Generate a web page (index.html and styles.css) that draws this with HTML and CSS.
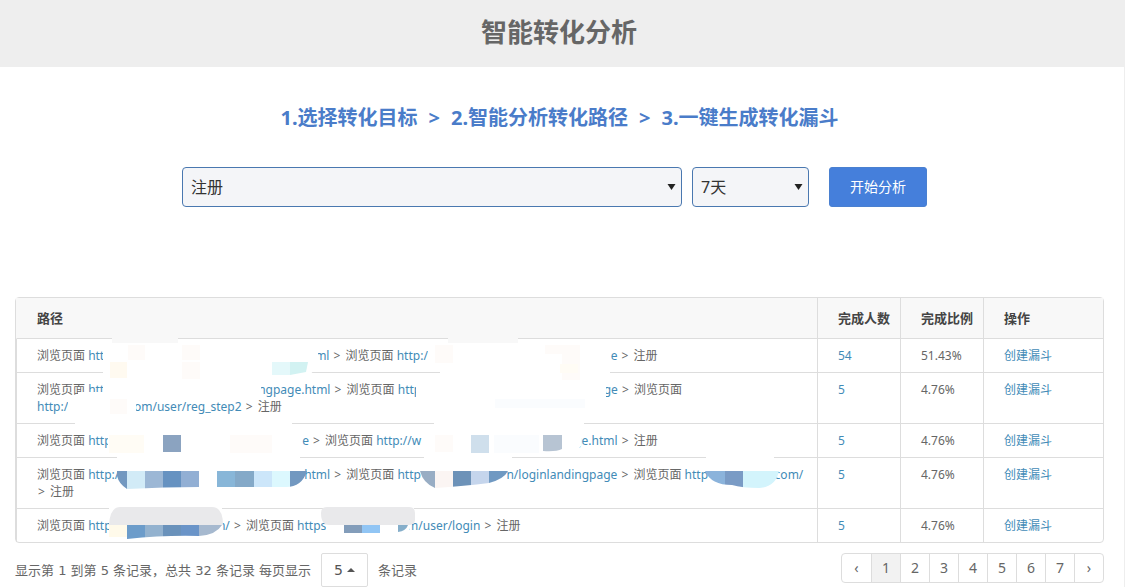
FILE: index.html
```html
<!DOCTYPE html>
<html lang="zh-CN">
<head>
<meta charset="utf-8">
<meta name="viewport" content="width=device-width, initial-scale=1">
<title>智能转化分析</title>
<link rel="stylesheet" href="styles.css">
</head>
<body>
<header class="page-header"><h1>智能转化分析</h1></header>
<main class="content">
  <h2 class="steps"><span>1.选择转化目标</span><span>&gt;</span><span>2.智能分析转化路径</span><span>&gt;</span><span>3.一键生成转化漏斗</span></h2>
  <form class="filters">
    <div class="select-box goal">
      <select aria-label="转化目标"><option>注册</option></select>
      <svg class="arrow" viewBox="0 0 8 6" aria-hidden="true"><path d="M0 0h8L4 6z"/></svg>
    </div>
    <div class="select-box days">
      <select aria-label="时间范围"><option>7天</option></select>
      <svg class="arrow" viewBox="0 0 8 6" aria-hidden="true"><path d="M0 0h8L4 6z"/></svg>
    </div>
    <button class="start" type="button">开始分析</button>
  </form>

  <div class="table-box">
    <table class="paths">
      <thead>
        <tr><th>路径</th><th class="num">完成人数</th><th class="num">完成比例</th><th class="act">操作</th></tr>
      </thead>
      <tbody>
        <tr>
          <td>浏览页面 <a href="#"><span class="lead r1a">htt</span>ml</a> <i>&gt;</i> 浏览页面 <a href="#"><span class="lead r1b">http:/</span>e</a> <i>&gt;</i> 注册</td>
          <td><a href="#">54</a></td><td>51.43%</td><td><a href="#">创建漏斗</a></td>
        </tr>
        <tr>
          <td>浏览页面 <a href="#"><span class="lead r2a">htt</span>ngpage.html</a> <i>&gt;</i> 浏览页面 <a href="#"><span class="lead r2b">http</span>ge</a> <i>&gt;</i> 浏览页面 <a href="#"><span class="lead r2c">http:/</span>om/user/reg_step2</a> <i>&gt;</i> 注册</td>
          <td><a href="#">5</a></td><td>4.76%</td><td><a href="#">创建漏斗</a></td>
        </tr>
        <tr>
          <td>浏览页面 <a href="#"><span class="lead r3a">http</span>e</a> <i>&gt;</i> 浏览页面 <a href="#"><span class="lead r3b">http://w</span>ge.html</a> <i>&gt;</i> 注册</td>
          <td><a href="#">5</a></td><td>4.76%</td><td><a href="#">创建漏斗</a></td>
        </tr>
        <tr>
          <td>浏览页面 <a href="#"><span class="lead r4a">http:/</span>html</a> <i>&gt;</i> 浏览页面 <a href="#"><span class="lead r4b">http</span>n/loginlandingpage</a> <i>&gt;</i> 浏览页面 <a href="#"><span class="lead r4c">http</span>com/</a> <i>&gt;</i> 注册</td>
          <td><a href="#">5</a></td><td>4.76%</td><td><a href="#">创建漏斗</a></td>
        </tr>
        <tr>
          <td>浏览页面 <a href="#"><span class="lead r5a">http</span>m/</a> <i>&gt;</i> 浏览页面 <a href="#"><span class="lead r5b">https</span>m/user/login</a> <i>&gt;</i> 注册</td>
          <td><a href="#">5</a></td><td>4.76%</td><td><a href="#">创建漏斗</a></td>
        </tr>
      </tbody>
    </table>
    <svg class="mosaic" width="803" height="246" viewBox="15 297 803 246" aria-hidden="true">
      <defs>
        <clipPath id="blob1"><path d="M117 471H199V487Q165 487 127 489Q119 484 117 476ZM217 471H307Q302 487 286 487H217Z"/></clipPath>
        <clipPath id="blob2"><path d="M420 471H508Q504 479 489 483Q465 486 435 488Q423 483 420 471Z"/></clipPath>
        <clipPath id="blob3"><path d="M705 471H779Q776 487 759 488Q742 488 732 485Q711 485 705 471Z"/></clipPath>
        <clipPath id="blob4"><path d="M109 525H222Q216 535 199 536Q165 535 127 539V525Z"/></clipPath>
      </defs>
      <g fill="#fff">
        <path d="M112 338H178V344H318V366L305 380H261V398H136V414H292V430H75V414H68V398H78V392H103V344H112Z"/>
        <path d="M108 430H300V458H303V471H117V452H108Z"/>
        <path d="M448 337H518V344H600V366H610V384H606V398H584V430H434V410H416V380H440V366H428V344H448Z"/>
        <path d="M424 432H581V446L576 452H512V471H424ZM706 456H774V471H706ZM109 507H222V532H109ZM326 508H414V520L408 532H326Z"/>
      </g>
      <path fill="#f8f8f8" d="M112 337h66v6h-66zM448 337h70v6h-70z"/>
      <path fill="#fefbf9" d="M128 345h17v15h-17zM182 345h18v15h-18zM182 362h18v17h-18zM435 345h18v18h-18zM545 345h35v9h-35zM110 399h17v15h-17zM230 435h42v18h-42zM435 435h18v17h-18zM562 345h18v35h-18z"/>
      <path fill="#fffaf0" d="M110 362h17v16h-17z"/><path fill="#fffcf5" d="M109 435h35v18h-35zM560 364h18v9h-18z"/>
      <path fill="#fafcfe" d="M495 399h90v9h-90zM494 435h45v18h-45z"/>
      <path fill="#e4f8fa" d="M272 362h18v13h-18z"/><path fill="#d2f2f2" d="M290 362h18l-2 10-16 3z"/>
      <path fill="#8ba3c0" d="M163 435h18v17h-18z"/><path fill="#cfdfec" d="M471 435h18v18h-18z"/><path fill="#b7c4d3" d="M543 435h19v14q-6 3-19 2z"/>
      <g clip-path="url(#blob1)">
        <path fill="#7298c0" d="M117 471h10v18h-10zM290 471h18v18h-18z"/><path fill="#d2ebf7" d="M127 471h18v18h-18z"/><path fill="#9cb7d5" d="M145 471h18v18h-18z"/><path fill="#6692c1" d="M163 471h18v18h-18z"/><path fill="#92afd4" d="M181 471h18v18h-18z"/><path fill="#88b6d8" d="M217 471h18v18h-18z"/><path fill="#84a9c8" d="M235 471h19v18h-19z"/><path fill="#cce6fa" d="M254 471h18v18h-18z"/><path fill="#dcf8fe" d="M272 471h18v18h-18z"/>
      </g>
      <g clip-path="url(#blob2)">
        <path fill="#98adc4" d="M420 471h15v18h-15z"/><path fill="#fbf5f3" d="M435 471h18v18h-18z"/><path fill="#6d92b8" d="M453 471h18v18h-18z"/><path fill="#c5d5ec" d="M471 471h18v18h-18z"/><path fill="#7099c2" d="M489 471h19v18h-19z"/>
      </g>
      <g clip-path="url(#blob3)">
        <path fill="#8bb3db" d="M705 471h20v18h-20z"/><path fill="#7a9bc5" d="M725 471h18v18h-18z"/><path fill="#d3f4fc" d="M743 471h36v18h-36z"/>
      </g>
      <path fill="#fffaea" d="M109 525h18v12h-18z"/>
      <g clip-path="url(#blob4)">
        <path fill="#6c9cca" d="M127 525h18v14h-18z"/><path fill="#93b2cf" d="M145 525h18v14h-18z"/><path fill="#6a92bb" d="M163 525h18v14h-18z"/><path fill="#6a94c8" d="M181 525h18v14h-18z"/><path fill="#a6b9cf" d="M199 525h23v14h-23z"/>
      </g>
      <path fill="#e9e9eb" d="M109 525Q110 507 120 507H212Q223 507 223 525ZM321 513Q321 507 327 507H409Q415 507 415 513V520Q415 525 408 525H329Q321 525 321 513Z"/>
      <path fill="#839dba" d="M344 525h18v8h-18z"/><path fill="#91c5f4" d="M362 525h18v8h-18z"/><path fill="#85aeca" d="M398 525h10q-2 6-10 7z"/>
    </svg>
  </div>

  <div class="table-footer">
    <div class="info">
      <span>显示第 1 到第 5 条记录，总共 32 条记录 每页显示</span>
      <button class="page-size" type="button" aria-label="每页 5 条">5<svg viewBox="0 0 8 4" aria-hidden="true"><path d="M0 4h8L4 0z"/></svg></button>
      <span>条记录</span>
    </div>
    <nav class="pager" aria-label="分页">
      <a href="#" aria-label="上一页">‹</a><a href="#" class="active" aria-current="page">1</a><a href="#">2</a><a href="#">3</a><a href="#">4</a><a href="#">5</a><a href="#">6</a><a href="#">7</a><a href="#" aria-label="下一页">›</a>
    </nav>
  </div>
</main>
</body>
</html>
```
FILE: styles.css
```css
* { box-sizing: border-box; }
body {
  margin: 0;
  background: #fff;
  color: #666;
  font: 13px/17px "Noto Sans", "Noto Sans CJK SC", sans-serif;
}
a { color: #428bb7; text-decoration: none; }
button, select { font-family: inherit; }

.page-header {
  display: flex;
  justify-content: center;
  padding: 13px 7px 16px 0;
  background: #eee;
}
h1 { margin: 0; font-size: 26px; line-height: 38px; color: #666; }

.content {
  padding: 37px 20px 0 15px;
  border-right: 1px solid #eee;
}
.steps {
  display: flex;
  justify-content: center;
  gap: 11px;
  margin: 0;
  font-size: 20px;
  line-height: 28px;
  color: #4a7cc9;
}

.filters {
  display: flex;
  justify-content: center;
  gap: 10px;
  margin: 35px 10px 90px 0;
}
.select-box { position: relative; height: 40px; }
.goal { flex: 0 1 500px; }
.days { flex: 0 0 117px; }
.select-box select {
  appearance: none;
  width: 100%;
  height: 100%;
  padding: 0 24px 0 8px;
  border: 1px solid #4a78b0;
  border-radius: 4px;
  background: #f4f5f8;
  color: #333;
  font-size: 16px;
}
.arrow {
  position: absolute;
  top: 17px;
  right: 6px;
  width: 9px;
  height: 6px;
  fill: #222;
  pointer-events: none;
}
.start {
  width: 98px;
  height: 40px;
  margin-left: 10px;
  padding: 0 0 2px;
  border: 1px solid #4a80d0;
  border-radius: 3px;
  background: #457fdb;
  color: #fff;
  font-size: 14px;
}

.table-box {
  position: relative;
  border: 1px solid #ddd;
  border-radius: 4px;
}
.paths {
  width: 100%;
  border-spacing: 0;
  table-layout: fixed;
}
.paths th, .paths td {
  padding: 8px 8px 8px 20px;
  border-bottom: 1px solid #ddd;
  border-left: 1px solid #ddd;
  text-align: left;
  vertical-align: top;
  white-space: nowrap;
}
.paths th {
  padding: 12px 8px 11px 20px;
  background: #f8f8f8;
  color: #444;
  font-size: 13px;
}
.paths td { font-size: 12px; }
.paths td:first-child { white-space: normal; }
.paths th:first-child { border-left-color: #f8f8f8; }
.paths tr:last-child td { border-bottom: 0; }
.paths thead tr th { border-bottom: 1px solid #ddd; }
.num { width: 83px; }
.act { width: 120px; }
.paths i { padding: 0 2px 0 1px; font-style: normal; }
.paths td a { white-space: nowrap; }

.lead { display: inline-block; }
.r1a { width: 227px; }
.r1b { width: 214px; }
.r2a { width: 170px; }
.r2b { width: 206px; }
.r2c { width: 97px; }
.r3a { width: 214px; }
.r3b { width: 198px; }
.r4a { width: 216px; }
.r4b { width: 109px; }
.r4c { width: 90px; }
.r5a { width: 126px; }
.r5b { width: 110px; }

.mosaic {
  position: absolute;
  top: -1px;
  left: -1px;
  pointer-events: none;
}

.table-footer {
  display: flex;
  justify-content: space-between;
  padding-top: 10px;
}
.info {
  display: flex;
  align-items: center;
  gap: 10px;
  font-family: "DejaVu Sans", "Noto Sans CJK SC", sans-serif;
}
.page-size {
  display: flex;
  align-items: center;
  gap: 4px;
  height: 34px;
  padding: 0 12px;
  border: 1px solid #ddd;
  border-radius: 2px;
  background: #fff;
  color: #555;
  font-size: 14px;
}
.page-size svg { width: 8px; height: 4px; fill: #555; }
.pager {
  display: flex;
  align-self: flex-start;
  height: 30px;
  border: 1px solid #ddd;
  border-radius: 4px;
}
.pager a {
  width: 29px;
  color: #666;
  font-size: 14px;
  line-height: 28px;
  text-align: center;
}
.pager a + a { border-left: 1px solid #ddd; }
.pager .active { background: #f2f2f2; }
```
